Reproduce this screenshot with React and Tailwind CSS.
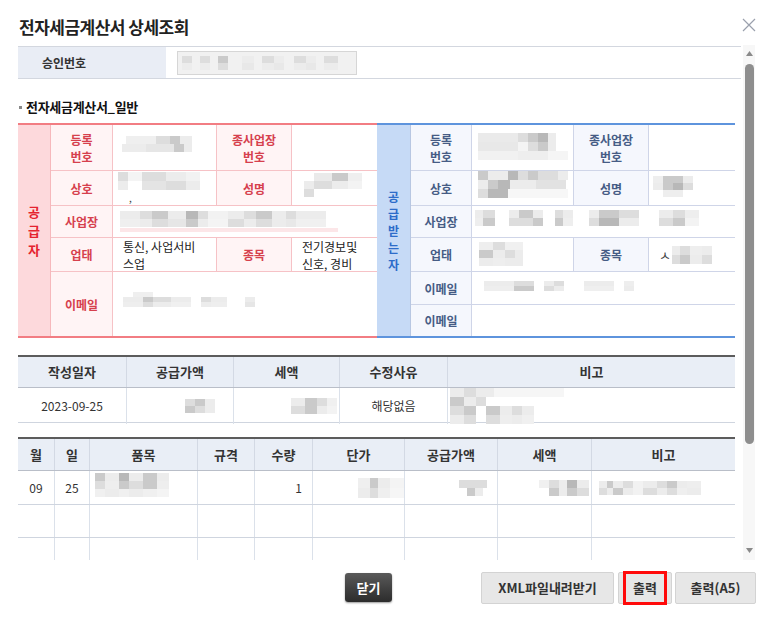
import React from "react";

const L = "#ececec";
const M = "#dddddd";
const D = "#cacaca";
const X = "#b8b8b8";
const W = "transparent";

// blurred (masked) data in the screenshot: rows of grey blocks
const Blur = ({ rows, h = 8, className = "" }) => (
  <div className={`flex flex-col blur-[0.6px] ${className}`}>
    {rows.map((row, i) => (
      <div key={i} className="flex" style={{ height: h }}>
        {row.map(([w, c], j) => (
          <span key={j} style={{ width: w, background: c }} />
        ))}
      </div>
    ))}
  </div>
);

// two-line text, one block per line
const Lines = ({ items }) => (
  <div className="flex flex-col">
    {items.map((t) => (
      <span key={t} className="block">
        {t}
      </span>
    ))}
  </div>
);

const RedLabel = ({ children, className = "" }) => (
  <div
    className={`flex items-center justify-center text-center bg-[#fff4f5] border-r border-b border-[#f6c2c6] text-[#d6404d] font-bold text-[12px] leading-[17px] ${className}`}
  >
    {children}
  </div>
);

const RedCell = ({ children, className = "" }) => (
  <div className={`border-r border-b border-[#f6c2c6] bg-white text-[12px] leading-[17px] text-[#222] ${className}`}>
    {children}
  </div>
);

const BlueLabel = ({ children, className = "" }) => (
  <div
    className={`flex items-center justify-center text-center bg-[#f5f7fd] border-r border-b border-[#cfd5e8] text-[#465c85] font-bold text-[12px] leading-[17px] ${className}`}
  >
    {children}
  </div>
);

const BlueCell = ({ children, className = "" }) => (
  <div className={`border-r border-b border-[#cfd5e8] bg-white text-[12px] leading-[17px] text-[#222] ${className}`}>
    {children}
  </div>
);

const Supplier = () => (
  <div className="grid grid-cols-[33px_62px_104px_75px_85px] grid-rows-[46px_35px_32px_34px_64px] border-t-2 border-b-2 border-[#f27d83]">
    <div className="row-span-5 flex flex-col items-center justify-center bg-[#fdd9dc] border-r border-[#f6b8bc] text-[#e5232f] font-bold text-[13px] leading-[19px]">
      <span>공</span>
      <span>급</span>
      <span>자</span>
    </div>
    <RedLabel>
      <Lines items={["등록", "번호"]} />
    </RedLabel>
    <RedCell className="pl-[5px] pt-[11px]">
      <Blur
        rows={[
          [[8, W], [30, "#efefef"], [14, M], [10, D], [12, L]],
          [[4, W], [24, L], [28, "#e6e6e6"], [10, D], [8, L]],
        ]}
      />
    </RedCell>
    <RedLabel>
      <Lines items={["종사업장", "번호"]} />
    </RedLabel>
    <RedCell className="border-r-0" />

    <RedLabel>상호</RedLabel>
    <RedCell className="pl-[5px] pt-[1px] relative">
      <Blur
        rows={[
          [[10, M], [14, "#f4f4f4"], [24, M], [20, L], [14, "#f2f2f2"]],
          [[10, L], [14, W], [24, "#e4e4e4"], [20, M], [14, L]],
        ]}
        h={9}
      />
      <span className="absolute left-[16px] top-[22px] text-[10px] leading-none text-[#444]">,</span>
    </RedCell>
    <RedLabel>성명</RedLabel>
    <RedCell className="border-r-0 pl-[12px] pt-[2px]">
      <Blur
        rows={[
          [[10, W], [18, "#eaeaea"], [16, D], [14, "#efefef"]],
          [[10, L], [18, M], [16, L], [14, "#f3f3f3"]],
          [[10, M], [18, W]],
        ]}
        h={8}
      />
    </RedCell>

    <RedLabel>사업장</RedLabel>
    <RedCell className="col-span-3 border-r-0 pl-[7px] pt-[5px]">
      <Blur
        rows={[
          [[20, L], [12, M], [16, D], [18, L], [12, X], [10, M], [20, "#f2f2f2"], [16, L], [12, M], [16, D], [14, L], [10, M], [30, L]],
          [[20, "#efefef"], [12, L], [16, M], [18, "#e6e6e6"], [12, D], [10, L], [20, "#f4f4f4"], [16, M], [12, L], [16, M], [14, L], [10, "#e8e8e8"], [30, "#f0f0f0"]],
        ]}
      />
      <div className="mt-[1px] h-[4px] w-[218px] bg-[#fce6e8]" />
    </RedCell>

    <RedLabel>업태</RedLabel>
    <RedCell className="pl-[10px]">
      <Lines items={["통신, 사업서비", "스업"]} />
    </RedCell>
    <RedLabel>종목</RedLabel>
    <RedCell className="border-r-0 pl-[10px]">
      <Lines items={["전기경보및", "신호, 경비"]} />
    </RedCell>

    <RedLabel className="border-b-0">이메일</RedLabel>
    <RedCell className="col-span-3 border-r-0 border-b-0 pl-[10px] pt-[20px]">
      <Blur
        rows={[
          [[10, W], [20, "#efefef"]],
          [[20, L], [10, D], [18, M], [20, L], [10, W], [10, M], [16, L], [18, W], [10, L]],
          [[20, "#eeeeee"], [10, M], [18, L], [20, "#f0f0f0"], [10, W], [10, L], [16, "#eeeeee"], [18, W], [10, "#e6e6e6"]],
        ]}
        h={5}
      />
    </RedCell>
  </div>
);

const Buyer = () => (
  <div className="grid grid-cols-[34px_61px_102px_75px_86px] grid-rows-[46px_35px_32px_34px_33px_31px] border-t-2 border-b-2 border-[#5e94dd]">
    <div className="row-span-6 flex flex-col items-center justify-center bg-[#c6daf6] border-r border-[#b8c7e2] text-[#2d6cc9] font-bold text-[12px] leading-[17px]">
      <span>공</span>
      <span>급</span>
      <span>받</span>
      <span>는</span>
      <span>자</span>
    </div>
    <BlueLabel>
      <Lines items={["등록", "번호"]} />
    </BlueLabel>
    <BlueCell className="pl-[6px] pt-[8px]">
      <Blur
        rows={[
          [[40, "#eaeaea"], [10, M], [10, D], [10, X], [8, L]],
          [[40, "#e8e8e8"], [10, "#f4f4f4"], [10, M], [10, D], [8, L]],
          [[40, "#f1f1f1"], [30, "#eeeeee"], [20, "#f5f5f5"]],
        ]}
        h={9}
      />
    </BlueCell>
    <BlueLabel>
      <Lines items={["종사업장", "번호"]} />
    </BlueLabel>
    <BlueCell className="border-r-0" />

    <BlueLabel>상호</BlueLabel>
    <BlueCell className="pl-[6px]">
      <Blur
        rows={[
          [[10, D], [20, L], [10, X], [10, M], [10, D], [20, M], [10, L]],
          [[10, L], [10, D], [12, X], [26, L], [30, "#e2e2e2"]],
          [[10, M], [20, X], [60, "#f7f7f7"]],
        ]}
        h={9}
      />
    </BlueCell>
    <BlueLabel>성명</BlueLabel>
    <BlueCell className="border-r-0 pl-[4px] pt-[5px]">
      <Blur
        rows={[
          [[10, "#eeeeee"], [20, D], [10, L]],
          [[10, L], [10, D], [10, X], [10, M]],
          [[10, W], [20, "#eeeeee"]],
        ]}
        h={7}
      />
    </BlueCell>

    <BlueLabel>사업장</BlueLabel>
    <BlueCell className="col-span-3 border-r-0 pl-[3px] pt-[4px]">
      <Blur
        rows={[
          [[8, L], [12, M], [14, W], [10, L], [14, D], [10, L], [12, W], [8, M], [10, L], [16, W], [10, L], [20, D], [20, M], [20, W], [14, L], [12, M], [14, "#eeeeee"]],
          [[8, "#eeeeee"], [12, D], [14, W], [10, M], [14, M], [10, D], [12, W], [8, D], [10, "#eeeeee"], [16, W], [10, M], [20, X], [20, L], [20, W], [14, M], [12, D], [14, "#f3f3f3"]],
        ]}
      />
    </BlueCell>

    <BlueLabel>업태</BlueLabel>
    <BlueCell className="pl-[7px] pt-[4px]">
      <Blur
        rows={[
          [[14, "#eeeeee"], [12, M], [18, "#f0f0f0"]],
          [[14, D], [12, L], [10, M], [8, L]],
          [[14, L], [12, "#eeeeee"], [18, L]],
        ]}
        h={8}
      />
    </BlueCell>
    <BlueLabel>종목</BlueLabel>
    <BlueCell className="border-r-0 flex items-center pl-[10px]">
      <span className="text-[13px] text-[#444] mr-[1px]">ㅅ</span>
      <Blur
        rows={[
          [[8, L], [10, M], [12, "#eeeeee"], [10, L]],
          [[8, M], [10, D], [12, L], [10, M]],
        ]}
        h={9}
      />
    </BlueCell>

    <BlueLabel>이메일</BlueLabel>
    <BlueCell className="col-span-3 border-r-0 pl-[12px] pt-[9px]">
      <Blur
        rows={[
          [[30, L], [20, M], [10, W], [10, L], [10, M], [20, W], [30, L], [10, W], [10, "#eeeeee"]],
          [[30, "#eeeeee"], [20, D], [10, W], [10, M], [10, L], [20, W], [30, "#efefef"], [10, W], [10, L]],
        ]}
        h={5}
      />
    </BlueCell>

    <BlueLabel className="border-b-0">이메일</BlueLabel>
    <BlueCell className="col-span-3 border-r-0 border-b-0" />
  </div>
);

const sumHeads = ["작성일자", "공급가액", "세액", "수정사유", "비고"];
const itemHeads = ["월", "일", "품목", "규격", "수량", "단가", "공급가액", "세액", "비고"];

const SummaryTable = () => (
  <div className="mt-[17px] w-[717px] border-t-2 border-[#5c5c5c]">
    <div className="grid grid-cols-[109px_107px_106px_108px_287px] h-[31px] bg-[#e9eef6] border-b border-[#b9bec8]">
      {sumHeads.map((h) => (
        <div key={h} className="flex items-center justify-center border-r border-[#d3d9e4] last:border-r-0 text-[13px] font-bold text-[#333]">
          {h}
        </div>
      ))}
    </div>
    <div className="grid grid-cols-[109px_107px_106px_108px_287px] h-[35px] border-b border-[#cfd5df] text-[12px] text-[#333]">
      <div className="flex items-center justify-center border-r border-[#dbe1ea]">2023-09-25</div>
      <div className="flex items-center justify-end pr-[18px] border-r border-[#dbe1ea]">
        <Blur rows={[[[10, M], [10, D], [10, L]], [[10, D], [10, M], [10, L]]]} h={7} />
      </div>
      <div className="flex items-center justify-end pr-[2px] border-r border-[#dbe1ea]">
        <Blur rows={[[[14, L], [12, D], [10, M], [10, "#f0f0f0"]], [[14, M], [12, D], [10, L], [10, "#f3f3f3"]]]} h={8} />
      </div>
      <div className="flex items-center justify-center border-r border-[#dbe1ea]">해당없음</div>
      <div className="flex items-start pl-[2px]">
        <Blur
          rows={[
            [[14, L], [12, M], [18, L], [70, "#f6f6f6"]],
            [[14, D], [12, L], [10, M], [16, W]],
            [[14, M], [12, D], [10, W], [14, D], [12, L], [10, M], [12, L]],
            [[14, L], [12, M], [10, W], [14, M], [12, "#eeeeee"], [10, L], [12, "#f0f0f0"]],
          ]}
          h={9}
        />
      </div>
    </div>
  </div>
);

const itemCols = "grid grid-cols-[37px_35px_108px_57px_58px_92px_93px_94px_143px]";

const ItemsTable = () => (
  <div className="mt-[14px] w-[717px] border-t-2 border-[#5c5c5c]">
    <div className={`${itemCols} h-[32px] bg-[#e9eef6] border-b border-[#b9bec8]`}>
      {itemHeads.map((h, i) => (
        <div key={i} className="flex items-center justify-center border-r border-[#d3d9e4] last:border-r-0 text-[13px] font-bold text-[#333]">
          {h}
        </div>
      ))}
    </div>
    <div className={`${itemCols} h-[34px] border-b border-[#cfd5df] text-[12px] text-[#333]`}>
      <div className="flex items-center justify-center border-r border-[#dbe1ea]">09</div>
      <div className="flex items-center justify-center border-r border-[#dbe1ea]">25</div>
      <div className="flex items-start pl-[5px] pt-[2px] border-r border-[#dbe1ea]">
        <Blur
          rows={[
            [[10, D], [14, L], [10, X], [14, L], [14, D], [12, L]],
            [[10, M], [14, "#eeeeee"], [10, D], [14, M], [14, D], [12, "#eeeeee"]],
            [[10, "#f0f0f0"], [14, L], [10, "#f0f0f0"], [14, L], [14, "#f0f0f0"], [12, "#f4f4f4"]],
          ]}
          h={8}
        />
      </div>
      <div className="border-r border-[#dbe1ea]" />
      <div className="flex items-center justify-end pr-[10px] border-r border-[#dbe1ea]">1</div>
      <div className="flex items-center justify-end pr-[0px] border-r border-[#dbe1ea]">
        <Blur
          rows={[
            [[12, "#efefef"], [8, D], [12, L], [14, "#f4f4f4"]],
            [[12, L], [8, M], [12, "#efefef"], [14, "#f6f6f6"]],
          ]}
          h={10}
        />
      </div>
      <div className="flex items-center justify-end pr-[10px] border-r border-[#dbe1ea]">
        <Blur rows={[[[28, M]], [[8, W], [8, D], [8, L]]]} h={8} />
      </div>
      <div className="flex items-center justify-end pr-[2px] border-r border-[#dbe1ea]">
        <Blur rows={[[[10, "#f0f0f0"], [10, M], [8, L], [10, X], [12, L]], [[10, W], [10, D], [8, L], [10, D], [12, M]]]} h={8} />
      </div>
      <div className="flex items-center pl-[7px]">
        <Blur
          rows={[
            [[8, L], [6, D], [10, L], [10, M], [10, "#f2f2f2"], [14, L], [10, M], [10, D], [10, L], [14, "#eeeeee"]],
            [[8, M], [6, L], [10, D], [10, L], [10, "#f2f2f2"], [14, M], [10, L], [10, M], [10, "#efefef"], [14, L]],
          ]}
          h={7}
        />
      </div>
    </div>
    {[0, 1, 2].map((r) => (
      <div key={r} className={`${itemCols} h-[33px] border-b border-[#cfd5df]`}>
        {itemHeads.map((_, i) => (
          <div key={i} className="border-r border-[#dbe1ea] last:border-r-0" />
        ))}
      </div>
    ))}
  </div>
);

const Scrollbar = () => (
  <div className="w-[12px] h-full bg-[#f7f7f7] flex flex-col items-center pt-[6px] pb-[7px]">
    <svg width="7" height="5" viewBox="0 0 7 5">
      <path d="M0 5 L3.5 0 L7 5 Z" fill="#8a8a8a" />
    </svg>
    <div className="mt-[8px] w-[9px] h-[380px] rounded-full bg-[#8e8e8e]" />
    <div className="flex-1" />
    <svg width="7" height="5" viewBox="0 0 7 5">
      <path d="M0 0 L3.5 5 L7 0 Z" fill="#8a8a8a" />
    </svg>
  </div>
);

export default function App() {
  return (
    <div className="w-[773px] h-[643px] bg-white font-['Noto_Sans_CJK_KR',sans-serif] overflow-hidden">
      <div className="flex items-start justify-between h-[45px] pl-[19px] pr-[17px]">
        <h1 className="mt-[15px] text-[17px] leading-[24px] font-semibold text-[#222] tracking-[-0.5px]">
          전자세금계산서 상세조회
        </h1>
        <svg className="mt-[18px]" width="14" height="14" viewBox="0 0 14 14">
          <path d="M1 1 L13 13 M13 1 L1 13" stroke="#9aa0ad" strokeWidth="1.2" />
        </svg>
      </div>

      <div className="flex h-[515px] pl-[18px]">
        <div className="w-[725px] h-full overflow-hidden pt-[1px]">
          <div className="flex h-[33px] w-[723px] border-t border-b border-[#d3d7df]">
            <div className="w-[148px] flex items-center pl-[24px] bg-[#e9edf5] text-[12px] font-bold text-[#333]">
              승인번호
            </div>
            <div className="flex items-center pl-[11px]">
              <div className="w-[180px] h-[24px] border border-[#d6d6d6] bg-[#f1f1f1] flex items-center pl-[4px]">
                <Blur
                  rows={[
                    [[10, M], [8, W], [10, M], [8, W], [10, D], [14, W], [12, L], [8, W], [12, M], [10, L], [10, W], [12, M], [10, L], [8, W], [14, M]],
                    [[10, L], [8, W], [10, L], [8, W], [10, M], [14, W], [12, "#e8e8e8"], [8, W], [12, L], [10, "#e8e8e8"], [10, W], [12, L], [10, "#e8e8e8"], [8, W], [14, L]],
                  ]}
                  h={7}
                />
              </div>
            </div>
          </div>

          <div className="mt-[20px] flex items-center h-[16px] text-[13px] font-bold text-[#111] tracking-[-0.3px]">
            <span className="w-[3px] h-[3px] bg-[#888] mr-[4px] ml-[1px]" />
            전자세금계산서_일반
          </div>

          <div className="mt-[8px] flex w-[717px]">
            <Supplier />
            <Buyer />
          </div>

          <SummaryTable />
          <ItemsTable />
        </div>
        <Scrollbar />
      </div>

      <div className="mt-[12px] flex items-start">
        <button className="ml-[345px] mt-[1px] w-[47px] h-[29px] rounded-[3px] bg-gradient-to-b from-[#5a5a5a] to-[#2c2c2c] text-white text-[13px] font-bold shadow-[0_1px_2px_rgba(0,0,0,0.4)]">
          닫기
        </button>
        <div className="ml-auto mr-[17px] flex items-start">
          <button className="w-[133px] h-[32px] rounded-[2px] bg-[#e7e7e7] border border-[#d3d3d3] text-[13px] font-bold text-[#333]">
            XML파일내려받기
          </button>
          <button className="ml-[4px] w-[54px] h-[32px] rounded-[2px] bg-[#e7e7e7] border border-[#d3d3d3] flex items-center justify-center">
            <span className="w-[44px] h-[34px] border-[3px] border-[#ff0a0a] flex items-center justify-center text-[13px] font-bold text-[#333]">
              출력
            </span>
          </button>
          <button className="ml-[3px] w-[81px] h-[32px] rounded-[2px] bg-[#e7e7e7] border border-[#d3d3d3] text-[13px] font-bold text-[#333]">
            출력(A5)
          </button>
        </div>
      </div>
    </div>
  );
}
